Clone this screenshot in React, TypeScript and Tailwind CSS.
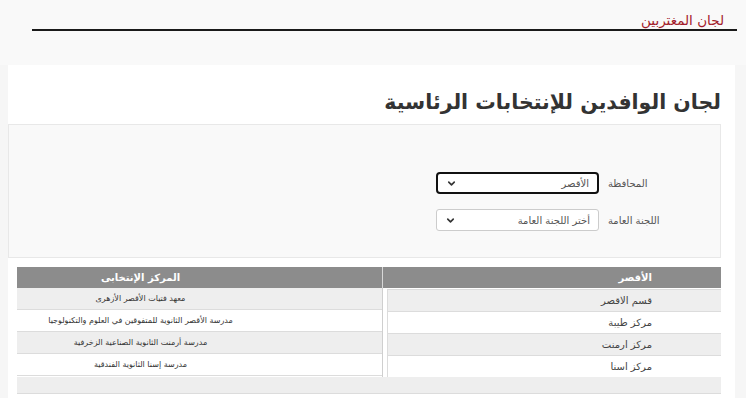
import { ChevronDown } from "lucide-react";

const font = "font-['DejaVu_Sans',_'Noto_Sans',_sans-serif]";

const centers = [
  "معهد فتيات الأقصر الأزهرى",
  "مدرسة الأقصر الثانوية للمتفوقين في العلوم والتكنولوجيا",
  "مدرسة أرمنت الثانوية الصناعية الزخرفية",
  "مدرسة إسنا الثانوية الفندقية",
];

const districts = ["قسم الاقصر", "مركز طيبة", "مركز ارمنت", "مركز اسنا"];

const SelectBox = ({ value, focused }: { value: string; focused?: boolean }) => (
  <div
    className={`w-[163px] h-[22px] flex items-center justify-between pr-2 pl-2 bg-white ${
      focused ? "border-2 border-[#111] rounded-[4px]" : "border border-[#cccccc] rounded-[3px]"
    }`}
  >
    <span className="text-[10px] text-[#555]">{value}</span>
    <ChevronDown className="h-[11px] w-[11px] text-[#333]" strokeWidth={3.5} />
  </div>
);

export default function App() {
  return (
    <div dir="rtl" className={`w-[746px] h-[398px] overflow-hidden bg-[#f6f6f6] ${font}`}>
      <div className="h-[65px] bg-[#f9f9f9] pt-[8px]">
        <div className="mr-[9px] ml-[32px] border-b-2 border-[#1a1a1a] h-[23px] pr-[13px]">
          <span className="text-[13.5px] text-[#a31c2b]">لجان المغتربين</span>
        </div>
      </div>
      <div className="mr-[11px] ml-[8px] bg-white h-[333px]">
        <h1 className="pr-[14px] pt-[22px] h-[59px] text-[20.5px] font-bold text-[#333]">
          لجان الوافدين للإنتخابات الرئاسية
        </h1>
        <div className="ml-0 mr-[14px] h-[134px] bg-[#f9f9f9] border border-[#e8e8e8] pt-[47px] pr-[52px] flex flex-col gap-[15px]">
          <div className="flex items-center gap-[9px]">
            <div className="w-[60px] text-left text-[10px] text-[#555]">المحافظة</div>
            <SelectBox value="الأقصر" focused />
          </div>
          <div className="flex items-center gap-[9px]">
            <div className="w-[60px] text-left text-[10px] text-[#555]">اللجنة العامة</div>
            <SelectBox value="أختر اللجنة العامة" />
          </div>
        </div>
        <div className="mt-[9px] mr-[14px] ml-[9px] text-[#333]">
          <div className="flex h-[21px] bg-[#8c8c8c] text-white font-bold text-[10px]">
            <div className="w-[338px] flex items-center pr-[69px]">الأقصر</div>
            <div className="flex-1 flex items-center justify-center pr-[118px] border-r border-[#d8d8d8]">
              المركز الإنتخابى
            </div>
          </div>
          <div className="flex">
            <div className="w-[338px] pl-[4px] pt-[1px] text-[10px] text-[#444]">
              {districts.map((d, i) => (
                <div
                  key={d}
                  className={`h-[22px] flex items-center pr-[69px] border-t border-l border-[#dcdcdc] ${
                    i % 2 === 0 ? "bg-[#eeeeee]" : "bg-white"
                  }`}
                >
                  {d}
                </div>
              ))}
            </div>
            <div className="flex-1 border-r border-[#cfcfcf] text-[8px]">
              {centers.map((c, i) => (
                <div
                  key={c}
                  className={`h-[22px] flex items-center justify-center pr-[118px] border-b border-[#dcdcdc] ${
                    i % 2 === 0 ? "bg-[#eeeeee]" : "bg-white"
                  }`}
                >
                  {c}
                </div>
              ))}
            </div>
          </div>
          <div className="h-[17px] bg-[#eeeeee] border-b border-[#dcdcdc]" />
        </div>
      </div>
    </div>
  );
}
